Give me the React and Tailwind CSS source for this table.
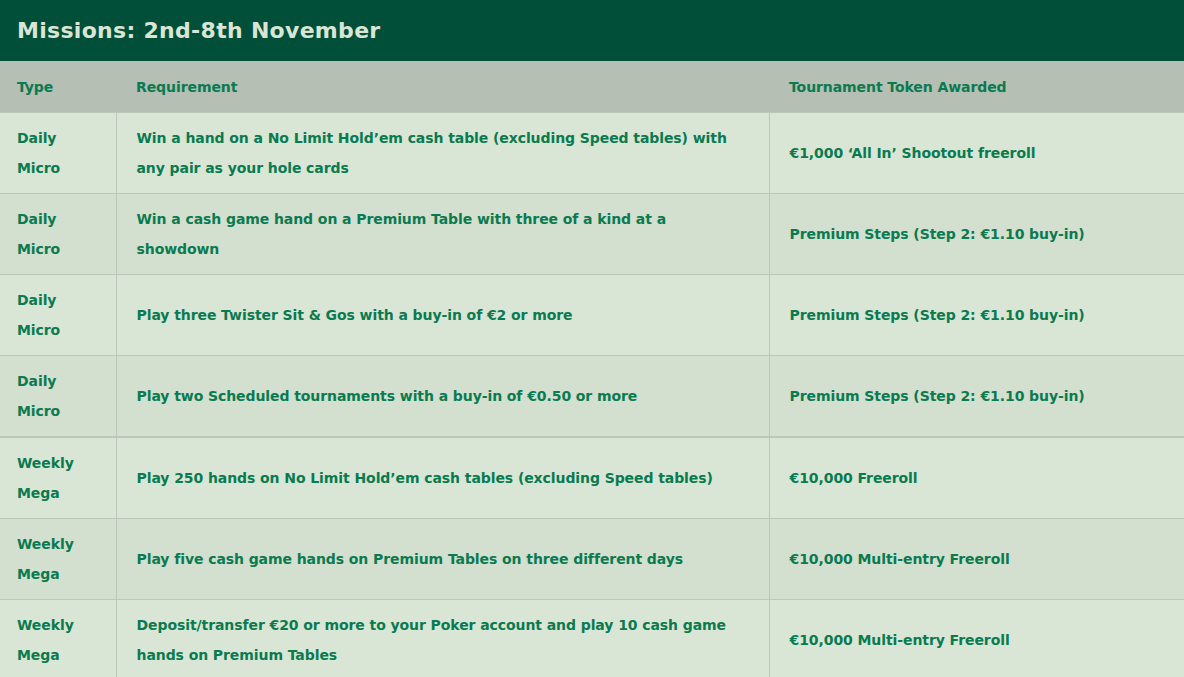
const rows = [
  {
    type: ["Daily", "Micro"],
    req: "Win a hand on a No Limit Hold\u2019em cash table (excluding Speed tables) with any pair as your hole cards",
    award: "\u20ac1,000 \u2018All In\u2019 Shootout freeroll",
  },
  {
    type: ["Daily", "Micro"],
    req: "Win a cash game hand on a Premium Table with three of a kind at a showdown",
    award: "Premium Steps (Step 2: \u20ac1.10 buy-in)",
  },
  {
    type: ["Daily", "Micro"],
    req: "Play three Twister Sit & Gos with a buy-in of \u20ac2 or more",
    award: "Premium Steps (Step 2: \u20ac1.10 buy-in)",
  },
  {
    type: ["Daily", "Micro"],
    req: "Play two Scheduled tournaments with a buy-in of \u20ac0.50 or more",
    award: "Premium Steps (Step 2: \u20ac1.10 buy-in)",
  },
  {
    type: ["Weekly", "Mega"],
    req: "Play 250 hands on No Limit Hold\u2019em cash tables (excluding Speed tables)",
    award: "\u20ac10,000 Freeroll",
    split: true,
  },
  {
    type: ["Weekly", "Mega"],
    req: "Play five cash game hands on Premium Tables on three different days",
    award: "\u20ac10,000 Multi-entry Freeroll",
  },
  {
    type: ["Weekly", "Mega"],
    req: "Deposit/transfer \u20ac20 or more to your Poker account and play 10 cash game hands on Premium Tables",
    award: "\u20ac10,000 Multi-entry Freeroll",
  },
];

export default function App() {
  return (
    <div className="w-[1184px] h-[677px] overflow-hidden bg-[#d9e6d5] font-['DejaVu_Sans',sans-serif]">
      <div className="h-[61px] bg-[#014f39] flex items-center px-[17px]">
        <h1 className="text-[22px] font-bold tracking-[0.3px] text-[#d9e6d5]">Missions: 2nd-8th November</h1>
      </div>
      <table className="w-full border-collapse table-fixed text-[14px] font-bold tracking-[-0.08px] text-[#0a7a50]">
        <colgroup>
          <col className="w-[116px]" />
          <col className="w-[653px]" />
          <col />
        </colgroup>
        <thead>
          <tr className="h-[51px] bg-[#b5bfb3] text-left">
            <th className="px-[17px] pt-[2px] font-bold">Type</th>
            <th className="pl-[20px] pr-[35px] pt-[2px] font-bold">Requirement</th>
            <th className="px-[20px] pt-[2px] font-bold">Tournament Token Awarded</th>
          </tr>
        </thead>
        <tbody>
          {rows.map((r, i) => (
            <tr
              key={i}
              className={
                (i % 2 === 0 ? "bg-[#d9e6d5] " : "bg-[#d3dfcf] ") +
                (r.split ? "border-t-2 border-[#bcc6ba]" : "border-t border-[#bcc6ba]")
              }
            >
              <td className="h-[80px] px-[17px] py-[10px] leading-[30px] align-middle">
                {r.type[0]}
                <br />
                {r.type[1]}
              </td>
              <td className="pl-[20px] pr-[35px] py-[10px] leading-[30px] align-middle border-l border-[#bcc6ba]">{r.req}</td>
              <td className="px-[20px] py-[10px] leading-[30px] align-middle border-l border-[#bcc6ba]">{r.award}</td>
            </tr>
          ))}
        </tbody>
      </table>
    </div>
  );
}
